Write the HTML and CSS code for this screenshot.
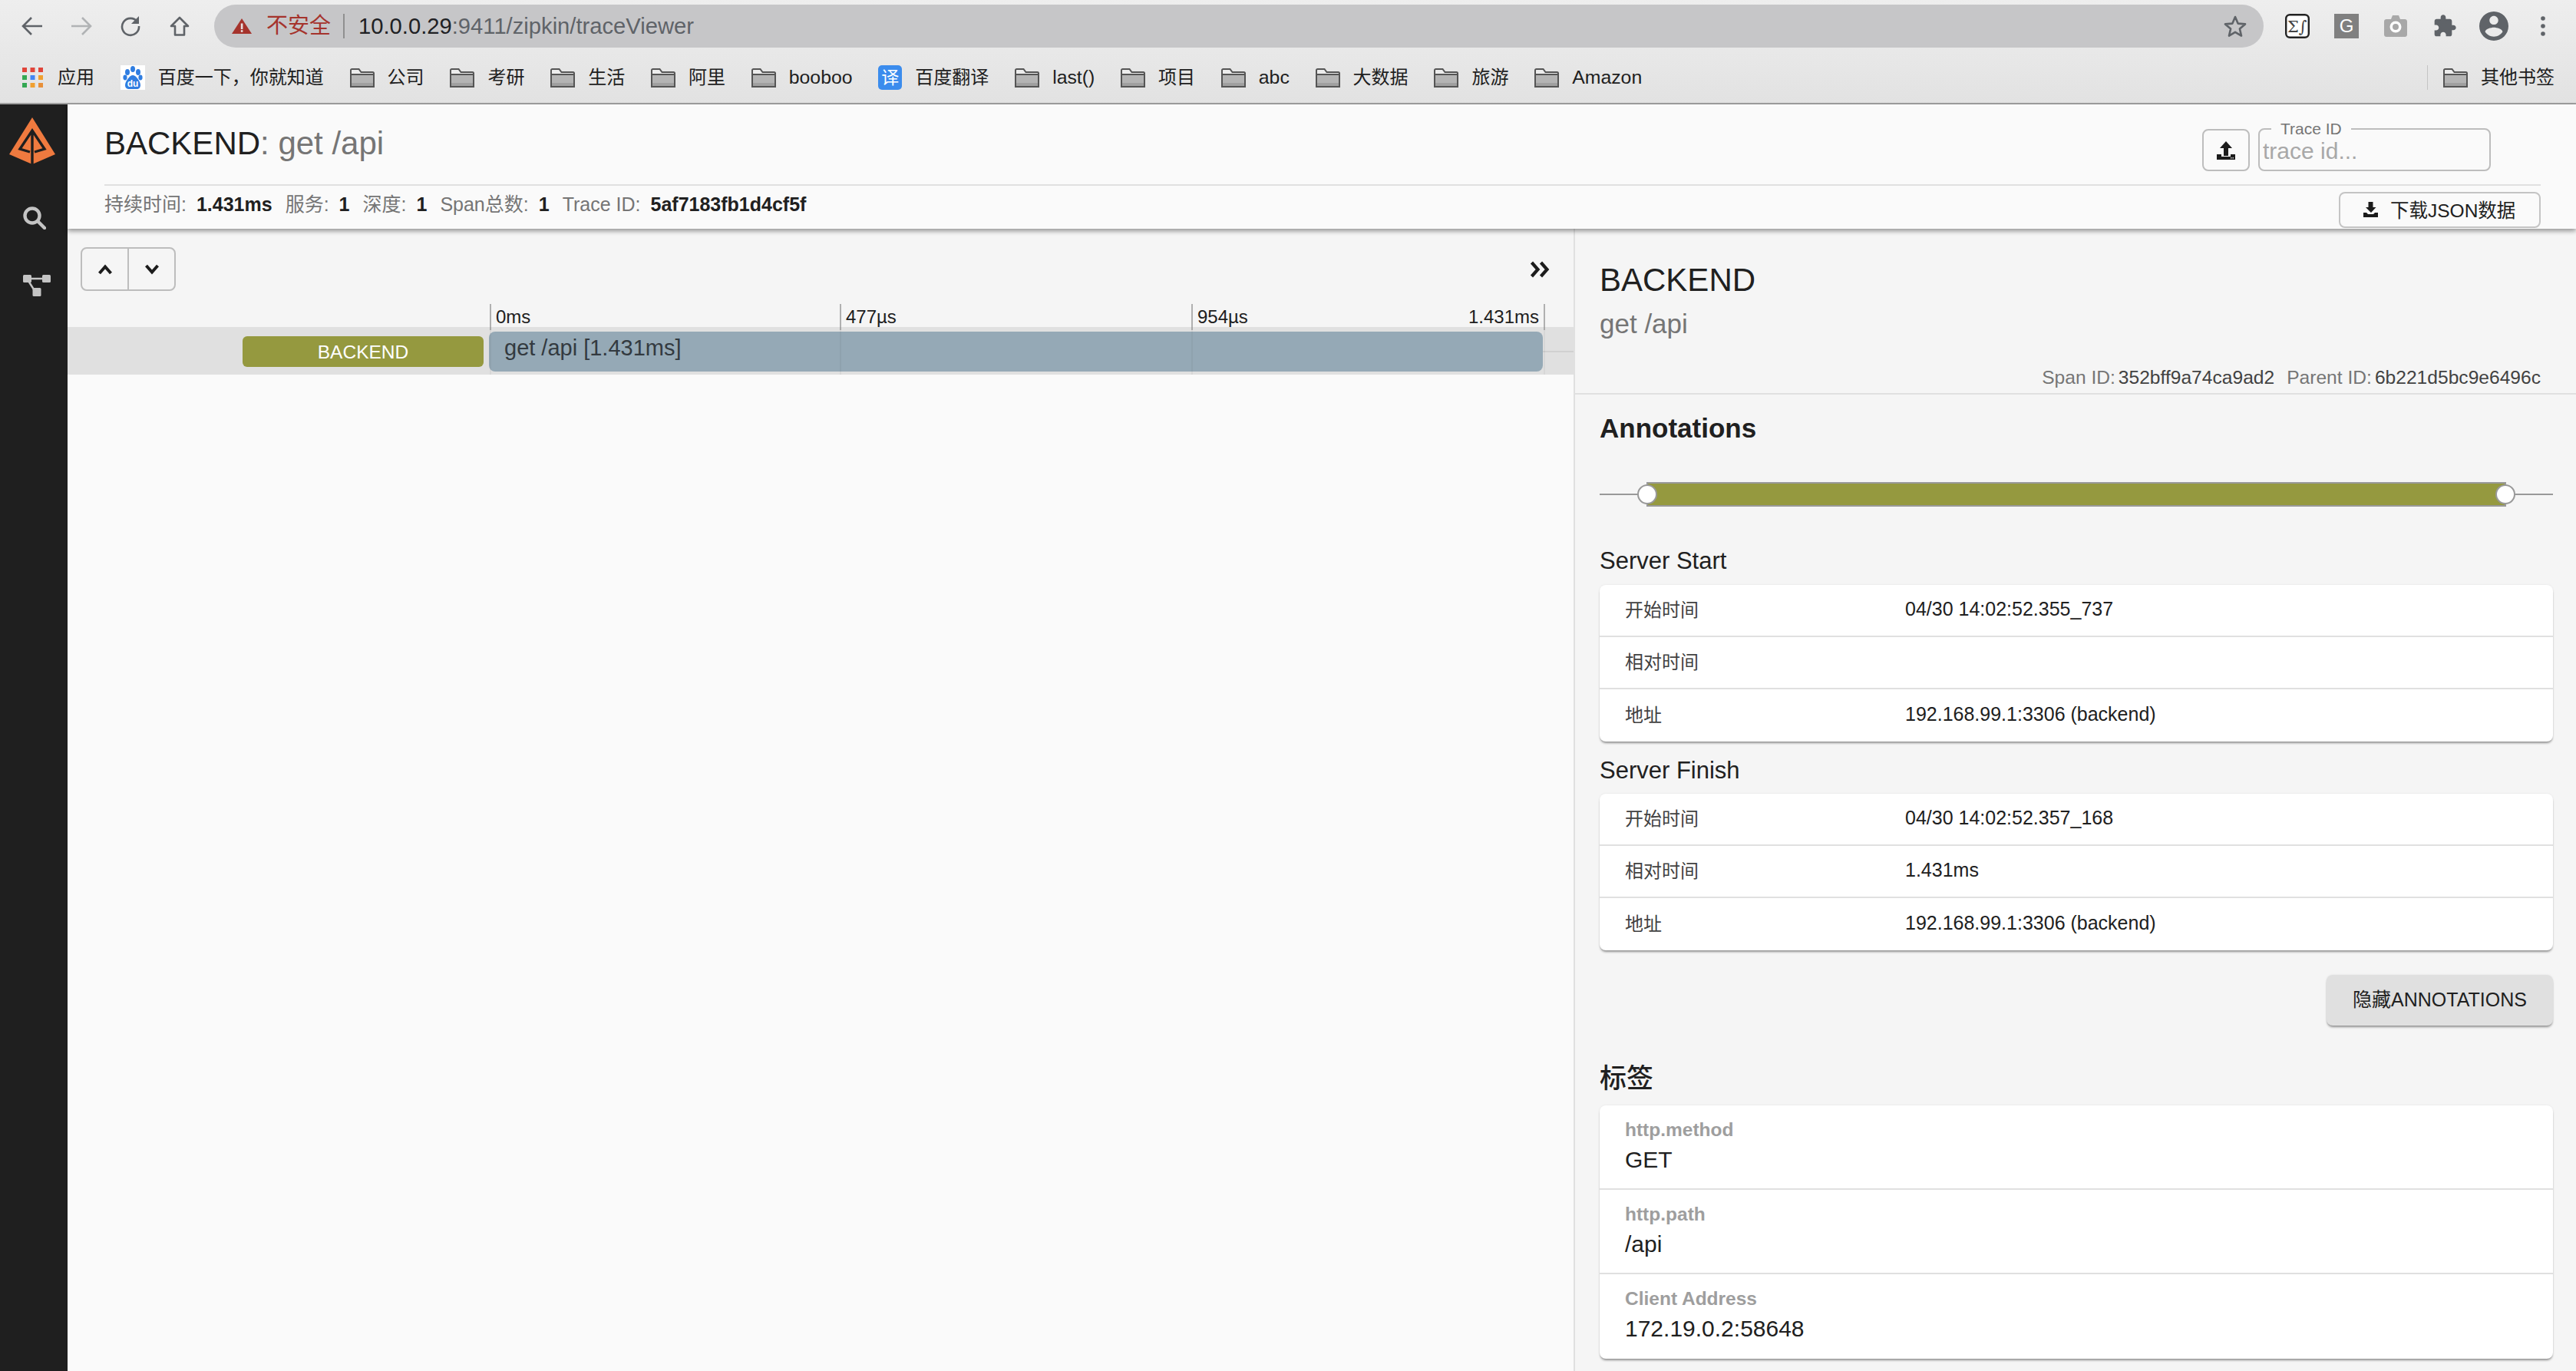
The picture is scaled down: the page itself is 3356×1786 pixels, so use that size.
FILE: index.html
```html
<!DOCTYPE html>
<html lang="zh-CN">
<head>
    <meta charset="UTF-8">
    <meta name="viewport" content="width=device-width, initial-scale=1.0">
    <title>Zipkin Trace Viewer</title>
    <link rel="stylesheet" href="styles.css">
</head>
<body>
    <svg class="defs" width="0" height="0">
        <symbol id="folder" viewBox="0 0 32 25">
            <path d="M1 24V2.5C1 1.6 1.6 1 2.5 1h9l3 4h15c.9 0 1.5.6 1.5 1.5V24z" fill="#ececec" stroke="#555" stroke-width="2"/>
            <rect x="2" y="8" width="28" height="15" fill="#b4b4b4"/>
            <rect x="2" y="7" width="28" height="2" fill="#555"/>
            <rect x="2" y="19" width="28" height="4" fill="#a0a0a0"/>
        </symbol>
    </svg>

    <div class="browser">
        <div class="toolbar">
            <div class="nav-btn">
                <svg width="28" height="26" viewBox="0 0 28 26"><path d="M27 13H3M13 2L2 13l11 11" fill="none" stroke="#5f6368" stroke-width="2.6"/></svg>
            </div>
            <div class="nav-btn">
                <svg width="28" height="26" viewBox="0 0 28 26"><path d="M1 13h24M15 2l11 11-11 11" fill="none" stroke="#b1b3b5" stroke-width="2.6"/></svg>
            </div>
            <div class="nav-btn">
                <svg width="28" height="28" viewBox="0 0 28 28"><path d="M23 8.5A11 11 0 1 0 25 14" fill="none" stroke="#5f6368" stroke-width="2.6"/><path d="M25 1v10H15z" fill="#5f6368"/></svg>
            </div>
            <div class="nav-btn">
                <svg width="26" height="26" viewBox="0 0 26 26"><path d="M13 2L2 13h5v11.5h12V13h5z" fill="none" stroke="#5f6368" stroke-width="2.6" stroke-linejoin="round"/></svg>
            </div>
            <div class="address">
                <svg width="26" height="20" viewBox="0 0 26 20"><path d="M13 0l13 20H0z" fill="#a5332c"/><rect x="11.8" y="6.5" width="2.6" height="7.5" fill="#e8e0e0"/><rect x="11.8" y="15.2" width="2.6" height="2.6" fill="#e8e0e0"/></svg>
                <span class="not-secure">不安全</span>
                <span class="url"><b>10.0.0.29</b>:9411/zipkin/traceViewer</span>
                <svg class="star" width="30" height="28" viewBox="0 0 30 28"><path d="M15 2l3.6 8.6 9.4.8-7.1 6.1 2.1 9.1-8-4.8-8 4.8 2.1-9.1L2 11.4l9.4-.8z" fill="none" stroke="#5f6368" stroke-width="2.6" stroke-linejoin="round"/></svg>
            </div>
            <div class="ext-icons">
                <div class="nav-btn">
                    <svg width="32" height="32" viewBox="0 0 32 32"><rect x="1.2" y="1.2" width="29.6" height="29.6" rx="5" fill="#fff" stroke="#222" stroke-width="2.4"/><text x="3" y="24" class="ext-sigma">Σ∫</text></svg>
                </div>
                <div class="nav-btn">
                    <svg width="32" height="32" viewBox="0 0 32 32"><rect width="32" height="32" fill="#808080"/><text x="16" y="24" class="ext-g">G</text></svg>
                </div>
                <div class="nav-btn">
                    <svg width="30" height="28" viewBox="0 0 30 28"><path d="M3 5h6l2-5h8l2 5h6c1.7 0 3 1.3 3 3v17c0 1.7-1.3 3-3 3H3c-1.7 0-3-1.3-3-3V8c0-1.7 1.3-3 3-3z" fill="#a8a8a8"/><circle cx="15" cy="15" r="7.5" fill="#fff"/><circle cx="15" cy="15" r="4" fill="#a8a8a8"/></svg>
                </div>
                <div class="nav-btn">
                    <svg width="32" height="32" viewBox="0 0 24 24"><path d="M20.5 11H19V7c0-1.1-.9-2-2-2h-4V3.5C13 2.12 11.88 1 10.5 1S8 2.12 8 3.5V5H4c-1.1 0-1.99.9-1.99 2v3.8H3.5c1.49 0 2.7 1.21 2.7 2.7s-1.21 2.7-2.7 2.7H2V20c0 1.1.9 2 2 2h3.8v-1.5c0-1.49 1.21-2.7 2.7-2.7 1.49 0 2.7 1.21 2.7 2.7V22H17c1.1 0 2-.9 2-2v-4h1.5c1.38 0 2.5-1.12 2.5-2.5S21.88 11 20.5 11z" fill="#5f6368"/></svg>
                </div>
                <div class="nav-btn">
                    <svg width="38" height="38" viewBox="2 2 20 20"><path d="M12 2C6.48 2 2 6.48 2 12s4.48 10 10 10 10-4.48 10-10S17.52 2 12 2zm0 3c1.66 0 3 1.34 3 3s-1.34 3-3 3-3-1.34-3-3 1.34-3 3-3zm0 14.2c-2.5 0-4.71-1.28-6-3.22.03-1.99 4-3.08 6-3.08 1.99 0 5.97 1.09 6 3.08-1.29 1.94-3.5 3.22-6 3.22z" fill="#5f6368"/></svg>
                </div>
                <div class="nav-btn">
                    <svg width="6" height="26" viewBox="0 0 6 26"><circle cx="3" cy="3" r="2.8" fill="#5f6368"/><circle cx="3" cy="13" r="2.8" fill="#5f6368"/><circle cx="3" cy="23" r="2.8" fill="#5f6368"/></svg>
                </div>
            </div>
        </div>

        <div class="bookmarks">
            <div class="bookmark apps">
                <svg width="27" height="26" viewBox="0 0 27 26">
                    <rect width="6" height="6" fill="#e0453a"/><rect x="10.5" width="6" height="6" fill="#e0453a"/><rect x="21" width="6" height="6" fill="#e0453a"/>
                    <rect y="10" width="6" height="6" fill="#34a853"/><rect x="10.5" y="10" width="6" height="6" fill="#4285f4"/><rect x="21" y="10" width="6" height="6" fill="#f0a030"/>
                    <rect y="20" width="6" height="6" fill="#34a853"/><rect x="10.5" y="20" width="6" height="6" fill="#f0a030"/><rect x="21" y="20" width="6" height="6" fill="#e8903a"/>
                </svg>
                <span>应用</span>
            </div>
            <div class="bookmark">
                <svg width="32" height="32" viewBox="0 0 32 32">
                    <rect width="32" height="32" fill="#fff"/>
                    <ellipse cx="9" cy="9" rx="3" ry="4" fill="#2f7de1"/><ellipse cx="16" cy="5" rx="3" ry="4" fill="#2f7de1"/><ellipse cx="23" cy="9" rx="3" ry="4" fill="#2f7de1"/><ellipse cx="6" cy="16" rx="2.6" ry="3.4" fill="#2f7de1"/><ellipse cx="26" cy="16" rx="2.6" ry="3.4" fill="#2f7de1"/>
                    <path d="M16 13c-4 0-10 8-10 13 0 4 3 5 5 5h10c3 0 5-2 5-5 0-5-6-13-10-13z" fill="#2f7de1"/>
                    <text x="16" y="28" class="baidu-du">du</text>
                </svg>
                <span>百度一下，你就知道</span>
            </div>
            <div class="bookmark"><svg class="folder"><use href="#folder"/></svg><span>公司</span></div>
            <div class="bookmark"><svg class="folder"><use href="#folder"/></svg><span>考研</span></div>
            <div class="bookmark"><svg class="folder"><use href="#folder"/></svg><span>生活</span></div>
            <div class="bookmark"><svg class="folder"><use href="#folder"/></svg><span>阿里</span></div>
            <div class="bookmark"><svg class="folder"><use href="#folder"/></svg><span class="latin">booboo</span></div>
            <div class="bookmark">
                <div class="translate-icon">译</div>
                <span>百度翻译</span>
            </div>
            <div class="bookmark"><svg class="folder"><use href="#folder"/></svg><span class="latin">last()</span></div>
            <div class="bookmark"><svg class="folder"><use href="#folder"/></svg><span>项目</span></div>
            <div class="bookmark"><svg class="folder"><use href="#folder"/></svg><span class="latin">abc</span></div>
            <div class="bookmark"><svg class="folder"><use href="#folder"/></svg><span>大数据</span></div>
            <div class="bookmark"><svg class="folder"><use href="#folder"/></svg><span>旅游</span></div>
            <div class="bookmark"><svg class="folder"><use href="#folder"/></svg><span class="latin">Amazon</span></div>
            <div class="bookmark other">
                <svg class="folder"><use href="#folder"/></svg><span>其他书签</span>
            </div>
        </div>
    </div>

    <div class="app">
        <aside class="sidebar">
            <svg class="logo" width="60" height="61" viewBox="0 0 60 61">
                <path d="M30 0l30 48-30 13L0 48z" fill="#ef7a3f"/>
                <path d="M27 45l-13-4 16-24 16 24-13 4M30 19v42" fill="none" stroke="#1f1f1f" stroke-width="3.4"/>
            </svg>
            <svg class="search-icon" width="30" height="30" viewBox="0 0 30 30">
                <circle cx="12" cy="12" r="9.5" fill="none" stroke="#c4c4c4" stroke-width="4.4"/>
                <path d="M19 19l9 9" stroke="#c4c4c4" stroke-width="4.4" stroke-linecap="round"/>
            </svg>
            <svg class="deps-icon" width="36" height="28" viewBox="0 0 36 28">
                <rect width="11" height="10" rx="1.5" fill="#c4c4c4"/>
                <rect x="25" width="11" height="10" rx="1.5" fill="#c4c4c4"/>
                <rect x="12.5" y="17" width="11" height="11" rx="1.5" fill="#c4c4c4"/>
                <path d="M10 5h16M7 8l7 11" stroke="#c4c4c4" stroke-width="2.4"/>
            </svg>
        </aside>

        <div class="content">
            <header class="trace-header">
                <div class="header-top">
                    <h1 class="trace-title">BACKEND<span class="muted">: get /api</span></h1>
                    <div class="trace-actions">
                        <button class="icon-btn" type="button">
                            <svg width="24" height="24" viewBox="0 0 24 24"><path d="M12 0l8 9h-5v10H9V9H4z" fill="#1c1c1c"/><path d="M0 17h6v3h12v-3h6v7H0z" fill="#1c1c1c"/><rect x="18" y="21" width="1.5" height="1.5" fill="#ccc"/><rect x="20.5" y="21" width="1.5" height="1.5" fill="#ccc"/></svg>
                        </button>
                        <fieldset class="trace-field">
                            <legend>Trace ID</legend>
                            <input type="text" placeholder="trace id...">
                        </fieldset>
                    </div>
                </div>
                <div class="header-meta">
                    <div class="meta-list">
                        <span class="meta-item"><span class="meta-label">持续时间:</span><b>1.431ms</b></span>
                        <span class="meta-item"><span class="meta-label">服务:</span><b>1</b></span>
                        <span class="meta-item"><span class="meta-label">深度:</span><b>1</b></span>
                        <span class="meta-item"><span class="meta-label">Span总数:</span><b>1</b></span>
                        <span class="meta-item"><span class="meta-label">Trace ID:</span><b>5af7183fb1d4cf5f</b></span>
                    </div>
                    <button class="download-btn" type="button">
                        <svg width="19" height="20" viewBox="0 0 19 20"><path d="M6.5 0h6v7h4L10 14 3 7h3.5z" fill="#1c1c1c"/><path d="M0 14h4l2 2h7l2-2h4v6H0z" fill="#1c1c1c"/></svg>
                        <span>下载JSON数据</span>
                    </button>
                </div>
            </header>

            <main class="main">
                <section class="timeline">
                    <div class="timeline-head">
                        <div class="timeline-tools">
                            <div class="step-btns">
                                <button type="button">
                                    <svg width="20" height="14" viewBox="0 0 20 14"><path d="M2.5 12L10 3.5l7.5 8.5" fill="none" stroke="#1c1c1c" stroke-width="4"/></svg>
                                </button>
                                <button type="button">
                                    <svg width="20" height="14" viewBox="0 0 20 14"><path d="M2.5 2L10 10.5 17.5 2" fill="none" stroke="#1c1c1c" stroke-width="4"/></svg>
                                </button>
                            </div>
                            <svg width="26" height="22" viewBox="0 0 26 22"><path d="M2.5 2l8 9-8 9M14.5 2l8 9-8 9" fill="none" stroke="#1c1c1c" stroke-width="4.2"/></svg>
                        </div>
                        <div class="ruler">
                            <div class="tick">0ms</div>
                            <div class="tick">477µs</div>
                            <div class="tick tick-last"><span>954µs</span><span>1.431ms</span></div>
                        </div>
                    </div>
                    <div class="span-row">
                        <div class="span-name"><div class="service-chip">BACKEND</div></div>
                        <div class="span-track">
                            <div class="span-bar">get /api [1.431ms]</div>
                            <div class="track-ticks"><i></i><i></i><i></i></div>
                        </div>
                    </div>
                </section>

                <section class="detail">
                    <div class="detail-head">
                        <div class="detail-service">BACKEND</div>
                        <div class="detail-span">get /api</div>
                        <div class="detail-ids">
                            <span><span class="id-label">Span ID:</span>352bff9a74ca9ad2</span>
                            <span><span class="id-label">Parent ID:</span>6b221d5bc9e6496c</span>
                        </div>
                    </div>
                    <div class="detail-body">
                        <h3 class="annotations-title">Annotations</h3>
                        <svg class="annotation-graph" viewBox="0 0 1242 32">
                            <path d="M0 16h1242" stroke="#999" stroke-width="2"/>
                            <rect x="62" y="1" width="1118" height="30" fill="#95993f" stroke="#999" stroke-width="2"/>
                            <circle cx="62" cy="16" r="12" fill="#fff" stroke="#999" stroke-width="2"/>
                            <circle cx="1180" cy="16" r="12" fill="#fff" stroke="#999" stroke-width="2"/>
                        </svg>

                        <h4 class="annotation-name first">Server Start</h4>
                        <div class="card">
                            <div class="info-row"><span class="info-key">开始时间</span><span>04/30 14:02:52.355_737</span></div>
                            <div class="info-row"><span class="info-key">相对时间</span><span></span></div>
                            <div class="info-row"><span class="info-key">地址</span><span>192.168.99.1:3306 (backend)</span></div>
                        </div>

                        <h4 class="annotation-name">Server Finish</h4>
                        <div class="card">
                            <div class="info-row"><span class="info-key">开始时间</span><span>04/30 14:02:52.357_168</span></div>
                            <div class="info-row"><span class="info-key">相对时间</span><span>1.431ms</span></div>
                            <div class="info-row"><span class="info-key">地址</span><span>192.168.99.1:3306 (backend)</span></div>
                        </div>

                        <div class="hide-row"><button class="hide-btn" type="button">隐藏ANNOTATIONS</button></div>

                        <h3 class="tags-title">标签</h3>
                        <div class="card tags">
                            <div class="tag-row"><div class="tag-key">http.method</div><div class="tag-value">GET</div></div>
                            <div class="tag-row"><div class="tag-key">http.path</div><div class="tag-value">/api</div></div>
                            <div class="tag-row"><div class="tag-key">Client Address</div><div class="tag-value">172.19.0.2:58648</div></div>
                        </div>
                    </div>
                </section>
            </main>
        </div>
    </div>
</body>
</html>
```

FILE: styles.css
```css
* {
    box-sizing: border-box;
}

html, body {
    margin: 0;
    padding: 0;
    height: 100%;
}

body {
    width: 3356px;
    height: 1786px;
    overflow: hidden;
    display: flex;
    flex-direction: column;
    font-family: "Liberation Sans", "Noto Sans CJK SC", sans-serif;
    font-size: 24px;
    color: #202020;
    background-color: #fafafa;
}

.defs {
    display: block;
    height: 0;
}

/* browser chrome */
.browser {
    height: 136px;
    flex: none;
    background: linear-gradient(#eeeeee, #e2e2e2);
    border-bottom: 2px solid #a0a0a0;
}

.toolbar {
    height: 68px;
    padding: 6px 11px 6px 10px;
    display: flex;
    align-items: stretch;
}

.nav-btn {
    width: 64px;
    display: flex;
    align-items: center;
    justify-content: center;
}

.address {
    flex: 1;
    margin: 0 12px 0 13px;
    padding: 0 22px 0 23px;
    display: flex;
    align-items: center;
    background-color: #c6c6c8;
    border-radius: 28px;
}

.not-secure {
    margin-left: 19px;
    padding-right: 16px;
    border-right: 2px solid #909090;
    font-size: 28px;
    line-height: 32px;
    color: #a5332c;
}

.url {
    margin-left: 18px;
    font-size: 29.2px;
    line-height: 32px;
    color: #5f6368;
}

.url b {
    font-weight: normal;
    color: #202124;
}

.star {
    margin-left: auto;
}

.ext-icons {
    display: flex;
}

.ext-sigma {
    font-family: "DejaVu Serif", serif;
    font-size: 21px;
    fill: #444;
}

.ext-g {
    font-size: 24px;
    fill: #fff;
    text-anchor: middle;
}

.baidu-du {
    font-size: 12px;
    font-weight: bold;
    fill: #fff;
    text-anchor: middle;
}

.bookmarks {
    height: 66px;
    padding: 0 28px 0 29px;
    display: flex;
    align-items: center;
    gap: 33.8px;
}

.bookmark {
    display: flex;
    align-items: center;
    gap: 17px;
    line-height: 32px;
    white-space: nowrap;
    color: #202020;
}

.latin {
    font-size: 24.8px;
}

.apps {
    gap: 19px;
}

.folder {
    width: 32px;
    height: 25px;
}

.translate-icon {
    width: 31px;
    height: 32px;
    display: flex;
    align-items: center;
    justify-content: center;
    background-color: #3b8ced;
    border-radius: 5px;
    font-size: 23px;
    color: #fff;
}

.other {
    margin-left: auto;
    height: 32px;
    padding-left: 20px;
    border-left: 1px solid #c4c4c4;
}

/* app layout */
.app {
    flex: 1;
    display: flex;
    min-height: 0;
}

.sidebar {
    width: 88px;
    flex: none;
    display: flex;
    flex-direction: column;
    align-items: flex-start;
    background-color: #1f1f1f;
}

.logo {
    margin: 17px 0 0 12px;
}

.search-icon {
    margin: 55px 0 0 30px;
}

.deps-icon {
    margin: 59px 0 0 30px;
}

.content {
    flex: 1;
    min-width: 0;
    display: flex;
    flex-direction: column;
}

/* trace header */
.trace-header {
    height: 162px;
    flex: none;
    padding: 0 46px 0 48px;
    background-color: #fafafa;
    box-shadow: 0 3px 6px rgba(0, 0, 0, 0.4);
    position: relative;
}

.header-top {
    height: 106px;
    display: flex;
    justify-content: space-between;
    align-items: flex-start;
    border-bottom: 2px solid #e0e0e0;
}

.trace-title {
    margin: 26px 0 0;
    font-size: 42px;
    font-weight: normal;
    line-height: 50px;
}

.muted {
    color: #757575;
}

.trace-actions {
    display: flex;
    align-items: flex-end;
    gap: 11px;
    margin: 21px 65px 0 0;
}

.icon-btn {
    width: 62px;
    height: 55px;
    padding: 0;
    display: flex;
    align-items: center;
    justify-content: center;
    background: transparent;
    border: 2px solid #bdbdbd;
    border-radius: 8px;
}

.trace-field {
    width: 303px;
    height: 66px;
    margin: 0;
    padding: 0 4px;
    border: 2px solid #bdbdbd;
    border-radius: 8px;
}

.trace-field legend {
    margin-left: 11px;
    padding: 0 12px;
    font-size: 21px;
    line-height: 22px;
    color: #757575;
}

.trace-field input {
    display: block;
    width: 100%;
    height: 36px;
    padding: 0;
    border: none;
    outline: none;
    background: transparent;
    font-family: inherit;
    font-size: 30px;
}

.trace-field input::placeholder {
    color: #a8a8a8;
    opacity: 1;
}

.header-meta {
    height: 56px;
    display: flex;
    justify-content: space-between;
    align-items: flex-start;
}

.meta-list {
    display: flex;
    gap: 17px;
    margin-top: 8px;
    font-size: 25px;
    line-height: 32px;
}

.meta-item {
    display: flex;
    gap: 13px;
}

.meta-label {
    color: #757575;
}

.meta-item b {
    color: #202020;
}

.download-btn {
    width: 263px;
    height: 47px;
    margin-top: 8px;
    padding: 0 0 2px 30px;
    display: flex;
    align-items: center;
    gap: 16px;
    background-color: #fafafa;
    border: 2px solid #c4c4c4;
    border-radius: 8px;
    font-family: inherit;
    font-size: 24.5px;
    color: #202020;
}

/* trace timeline */
.main {
    flex: 1;
    min-height: 0;
    display: flex;
}

.timeline {
    flex: 1;
    min-width: 0;
    background-color: #fafafa;
}

.timeline-head {
    height: 128px;
    padding-top: 24px;
    background-color: #f5f5f5;
}

.timeline-tools {
    height: 57px;
    padding: 0 31px 0 17px;
    display: flex;
    justify-content: space-between;
    align-items: center;
}

.step-btns {
    width: 124px;
    height: 57px;
    display: flex;
    border: 2px solid #bdbdbd;
    border-radius: 8px;
}

.step-btns button {
    flex: 1;
    padding: 0;
    display: flex;
    align-items: center;
    justify-content: center;
    background: transparent;
    border: none;
}

.step-btns button + button {
    border-left: 2px solid #bdbdbd;
}

.ruler {
    height: 30px;
    margin: 17px 37px 0 550px;
    display: grid;
    grid-template-columns: 456px 458px 461px;
}

.tick {
    padding: 0 6px;
    border-left: 2px solid #b0b0b0;
    line-height: 34px;
    white-space: nowrap;
}

.tick-last {
    display: flex;
    justify-content: space-between;
    border-right: 2px solid #b0b0b0;
}

.span-row {
    height: 62px;
    display: flex;
    background-color: #e0e0e0;
}

.span-name {
    width: 549px;
    flex: none;
    padding: 12px 0 0 228px;
}

.service-chip {
    width: 314px;
    height: 40px;
    background-color: #95993f;
    border-radius: 6px;
    font-size: 24.5px;
    line-height: 42px;
    text-align: center;
    color: #fff;
}

.span-track {
    flex: 1;
    padding: 6px 40px 0 0;
    position: relative;
    background: linear-gradient(#d0d0d0, #d0d0d0) no-repeat 0 31px / 100% 2px;
}

.span-bar {
    height: 52px;
    padding: 0 20px;
    background-color: #95a9b6;
    border-radius: 8px;
    font-size: 29px;
    line-height: 42px;
    color: #333a40;
}

.track-ticks {
    position: absolute;
    top: 0;
    bottom: 0;
    left: 1px;
    width: 1375px;
    display: grid;
    grid-template-columns: 456px 458px 461px;
    pointer-events: none;
}

.track-ticks i {
    border-left: 2px solid rgba(0, 0, 0, 0.04);
}

.track-ticks i:last-child {
    border-right: 2px solid rgba(0, 0, 0, 0.04);
}

/* span detail */
.detail {
    width: 1306px;
    flex: none;
    background-color: #f5f5f5;
    border-left: 2px solid #e0e0e0;
}

.detail-head {
    height: 216px;
    padding: 42px 46px 0 32px;
    border-bottom: 2px solid #e0e0e0;
}

.detail-service {
    font-size: 42px;
    line-height: 50px;
}

.detail-span {
    margin-top: 7px;
    font-size: 35px;
    line-height: 50px;
    color: #757575;
}

.detail-ids {
    margin-top: 30px;
    display: flex;
    justify-content: flex-end;
    gap: 16px;
    font-size: 24.6px;
    line-height: 30px;
    color: #424242;
}

.id-label {
    margin-right: 4px;
    color: #757575;
}

.detail-body {
    padding: 0 30px 0 32px;
}

.annotations-title {
    margin: 22px 0 0;
    font-size: 35px;
    font-weight: bold;
    line-height: 44px;
}

.annotation-graph {
    display: block;
    width: 1242px;
    height: 32px;
    margin-top: 48px;
}

.annotation-name {
    margin: 18px 0 10px;
    font-size: 31px;
    font-weight: normal;
    line-height: 40px;
}

.annotation-name.first {
    margin-top: 51px;
    margin-bottom: 11px;
}

.card {
    background-color: #fff;
    border-radius: 8px;
    box-shadow: 0 3px 3px -1px rgba(0, 0, 0, 0.4), 0 0 3px rgba(0, 0, 0, 0.08);
}

.info-row {
    height: 68px;
    padding: 0 33px 3px;
    display: flex;
    align-items: center;
    border-bottom: 2px solid #e0e0e0;
    font-size: 25px;
}

.info-row:last-child,
.tag-row:last-child {
    border-bottom: none;
}

.info-key {
    width: 365px;
    flex: none;
    margin-bottom: 3px;
    font-size: 24px;
    color: #424242;
}

.hide-row {
    margin-top: 32px;
    display: flex;
    justify-content: flex-end;
}

.hide-btn {
    width: 295px;
    height: 66px;
    padding: 0 0 6px;
    background-color: #e0e0e0;
    border: none;
    border-radius: 8px;
    box-shadow: 0 3px 3px -1px rgba(0, 0, 0, 0.4), 0 0 3px rgba(0, 0, 0, 0.08);
    font-family: inherit;
    font-size: 25px;
    color: #202020;
}

.tags-title {
    margin: 49px 0 15px;
    font-size: 35px;
    font-weight: 500;
    line-height: 40px;
}

.tag-row {
    height: 110px;
    padding: 17px 33px 0;
    border-bottom: 2px solid #e0e0e0;
}

.tag-key {
    font-size: 24.5px;
    font-weight: bold;
    line-height: 30px;
    color: #9e9e9e;
}

.tag-value {
    margin-top: 6px;
    font-size: 30px;
    line-height: 36px;
    color: #202020;
}
```
